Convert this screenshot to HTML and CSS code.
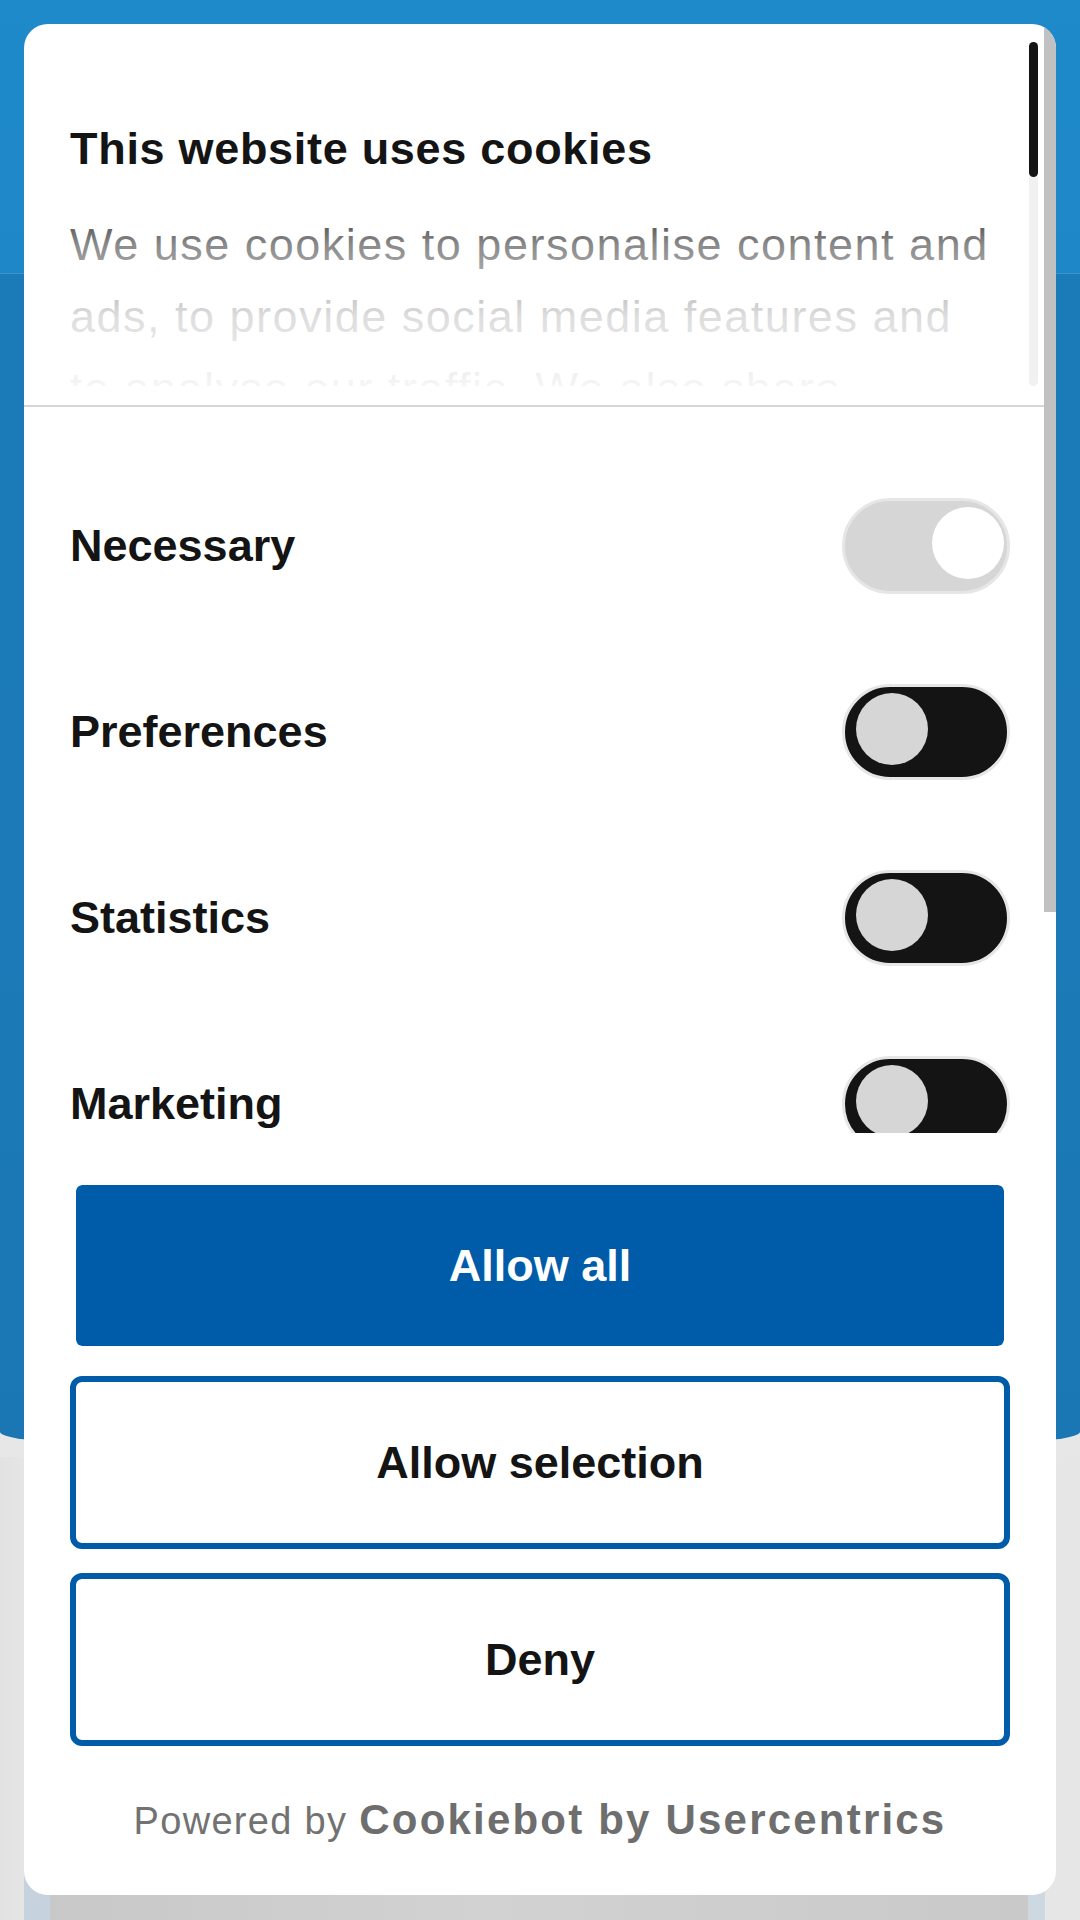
FILE: index.html
```html
<!DOCTYPE html>
<html lang="en">
<head>
<meta charset="utf-8">
<title>Cookie consent</title>
<link rel="stylesheet" href="styles.css">
</head>
<body>
<div class="page">
  <div class="hero"><div class="hero-bar"></div></div>
  <div class="below"><div class="peek"></div></div>
</div>

<div class="dialog" role="dialog" aria-label="Cookie consent">
  <div class="dlg-header">
    <div class="dlg-scroll">
      <h2 class="dlg-title">This website uses cookies</h2>
      <p class="dlg-text">We use cookies to personalise content and ads, to provide social media features and to analyse our traffic. We also share information about your use of our site with our social media, advertising and analytics partners who may combine it with other information that you’ve provided to them or that they’ve collected from your use of their services.</p>
      <div class="fade"></div>
    </div>
    <div class="inner-bar"><div class="inner-thumb"></div></div>
  </div>
  <div class="divider"></div>
  <div class="toggles">
    <div class="row">
      <span class="label">Necessary</span>
      <span class="switch switch-on"><span class="knob"></span></span>
    </div>
    <div class="row">
      <span class="label">Preferences</span>
      <span class="switch"><span class="knob"></span></span>
    </div>
    <div class="row">
      <span class="label">Statistics</span>
      <span class="switch"><span class="knob"></span></span>
    </div>
    <div class="row">
      <span class="label">Marketing</span>
      <span class="switch"><span class="knob"></span></span>
    </div>
  </div>
  <div class="buttons">
    <button class="btn btn-primary">Allow all</button>
    <button class="btn">Allow selection</button>
    <button class="btn">Deny</button>
  </div>
  <div class="footer"><span class="powered">Powered by</span><span class="brand">Cookiebot by Usercentrics</span></div>
  <div class="outer-thumb"></div>
</div>
</body>
</html>
```

FILE: styles.css
```css
html, body {
  margin: 0;
  padding: 0;
  width: 1080px;
  height: 1920px;
  overflow: hidden;
}

body {
  font-family: "Liberation Sans", Arial, sans-serif;
  background: #e7e7e7;
  position: relative;
}

.page {
  height: 1920px;
  display: flex;
  flex-direction: column;
}

.hero {
  height: 1457px;
  flex: none;
  background: linear-gradient(180deg, #1b7cba 0, #1b7ab7 60%, #1b77b3 100%);
  border-radius: 0 0 540px 540px / 0 0 25px 25px;
}

.hero-bar {
  height: 273px;
  background: linear-gradient(180deg, #1e8aca 0, #1e87c7 100%);
  border-bottom: 1px solid #3a92c9;
}

.below {
  flex: 1;
  background: linear-gradient(90deg, #e2e2e2 0, #eaeaea 60px, #e6e6e6 100%);
  padding: 400px 35px 0 24px;
}

.peek {
  height: 120px;
  background: linear-gradient(90deg, #c6d3de 0, #c6d3de 26px, #c8c8c8 26px, #d2d2d2 45%, #c9c9c9 calc(100% - 17px), #cdd8e1 calc(100% - 17px));
}

.dialog {
  position: absolute;
  top: 24px;
  left: 24px;
  width: 1032px;
  height: 1871px;
  background: #ffffff;
  border-radius: 24px;
  overflow: hidden;
  display: flex;
  flex-direction: column;
}

.dlg-header {
  height: 381px;
  flex: none;
  box-sizing: border-box;
  padding: 18px 18px 19px 46px;
  display: flex;
}

.dlg-scroll {
  flex: 1;
  position: relative;
  overflow: hidden;
  padding: 71px 34px 0 0;
}

.dlg-title {
  margin: 0 0 24px;
  font-size: 45px;
  line-height: 72px;
  font-weight: 700;
  letter-spacing: 0.7px;
  color: #141414;
}

.dlg-text {
  margin: 0;
  font-size: 45px;
  line-height: 72px;
  letter-spacing: 1.5px;
  color: #141414;
}

.fade {
  position: absolute;
  left: 0;
  right: 0;
  bottom: 0;
  height: 191px;
  background: linear-gradient(180deg,
    rgba(255,255,255,0) 0%,
    rgba(255,255,255,0.5) 26%,
    rgba(255,255,255,0.86) 64%,
    rgba(255,255,255,0.93) 92%,
    rgba(255,255,255,0.96) 100%);
}

.inner-bar {
  width: 9px;
  flex: none;
  background: #f1f1f1;
  border-radius: 5px;
}

.inner-thumb {
  height: 135px;
  background: #141414;
  border-radius: 5px;
}

.divider {
  height: 2px;
  flex: none;
  background: #d6d6d6;
}

.toggles {
  height: 726px;
  flex: none;
  box-sizing: border-box;
  overflow: hidden;
  padding: 46px 46px 0;
}

.row {
  height: 186px;
  display: flex;
  align-items: center;
  justify-content: space-between;
}

.label {
  font-size: 45px;
  font-weight: 700;
  color: #141414;
}

.switch {
  width: 168px;
  height: 96px;
  flex: none;
  box-sizing: border-box;
  border-radius: 48px;
  border: 3px solid #e6e6e6;
  background: #141414;
  display: flex;
  align-items: center;
  padding: 0 0 6px 11px;
}

.switch-on {
  background: #d6d6d6;
  justify-content: flex-end;
  padding: 0 3px 6px 0;
}

.knob {
  width: 72px;
  height: 72px;
  border-radius: 50%;
  background: #d6d6d6;
}

.switch-on .knob {
  background: #ffffff;
}

.buttons {
  flex: none;
  display: flex;
  flex-direction: column;
  gap: 24px;
  padding: 46px 46px 0;
}

.btn {
  height: 173px;
  width: 100%;
  box-sizing: border-box;
  margin: 0;
  padding: 0;
  border: 6px solid #005ca9;
  border-radius: 12px;
  background: #ffffff;
  font-family: inherit;
  font-size: 45px;
  font-weight: 700;
  color: #141414;
  display: flex;
  align-items: center;
  justify-content: center;
}

.btn-primary {
  background: #005ca9;
  background-clip: padding-box;
  border-color: #ffffff;
  color: #ffffff;
}

.footer {
  flex: none;
  display: flex;
  justify-content: center;
  align-items: baseline;
  gap: 12px;
  padding-top: 50px;
  line-height: 48px;
}

.powered {
  font-size: 38px;
  letter-spacing: 1.3px;
  color: #727272;
}

.brand {
  font-size: 42px;
  font-weight: 700;
  letter-spacing: 2.2px;
  color: #6e6e6e;
}

.outer-thumb {
  position: absolute;
  top: 0;
  right: 0;
  width: 12px;
  height: 888px;
  background: #c1c1c1;
}
```
